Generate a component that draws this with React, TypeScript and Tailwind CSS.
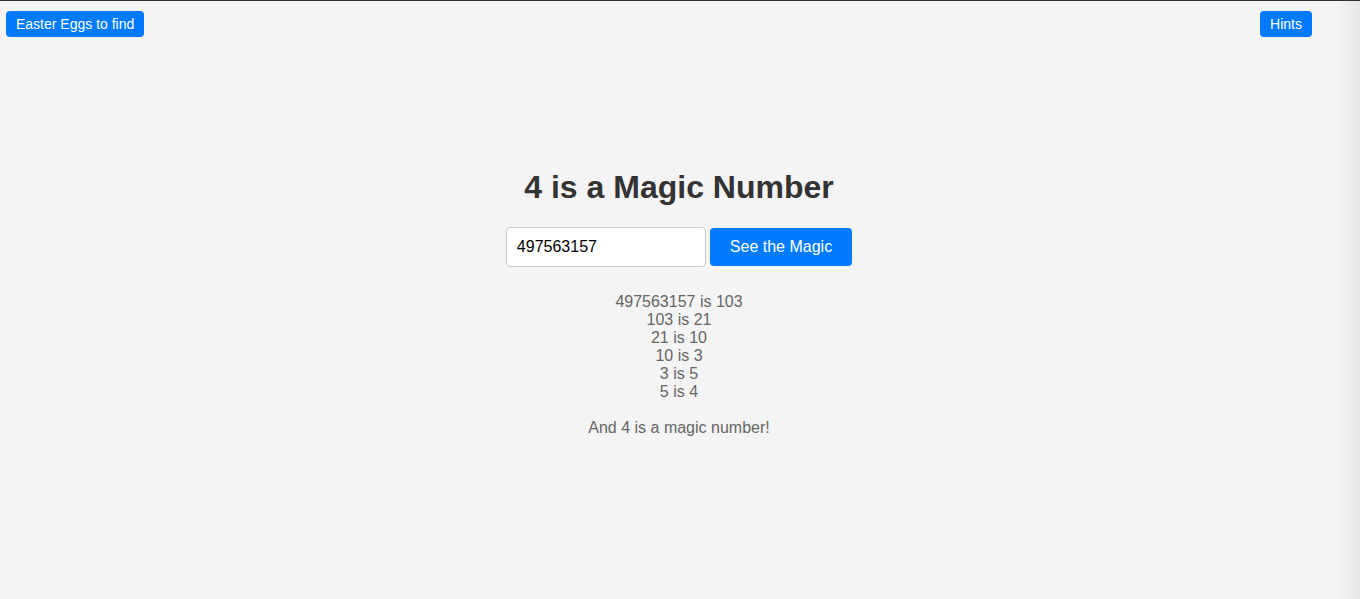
import React, { useState } from "react";

const font = { fontFamily: '"Liberation Sans", Arial, sans-serif' };

function steps(n: number): string[] {
  const words = [
    "zero", "one", "two", "three", "four", "five", "six", "seven", "eight", "nine",
  ];
  const lines: string[] = [];
  let cur = n;
  let guard = 0;
  while (cur !== 4 && guard < 20) {
    const next = cur === 497563157 ? 103 : cur === 103 ? 21 : cur === 21 ? 10 : cur === 10 ? 3 : cur === 3 ? 5 : cur === 5 ? 4 : words[cur % 10].length;
    lines.push(`${cur} is ${next}`);
    cur = next;
    guard++;
  }
  return lines;
}

const App: React.FC = () => {
  const [value, setValue] = useState("497563157");
  const lines = steps(497563157);

  return (
    <div
      className="min-h-screen bg-[#f4f4f4] border-t border-[#333] text-[#333]"
      style={font}
    >
      {/* Top buttons */}
      <div className="flex justify-between pl-[6px] pr-[48px] pt-[10px]">
        <button className="h-[26px] px-[10px] rounded-[4px] bg-[#007bff] text-white text-[14px] leading-none">
          Easter Eggs to find
        </button>
        <button className="h-[26px] px-[10px] rounded-[4px] bg-[#007bff] text-white text-[14px] leading-none">
          Hints
        </button>
      </div>

      {/* Main */}
      <div className="flex flex-col items-center pr-[2px]">
        <h1 className="mt-[132px] text-[32px] leading-[37px] font-bold text-[#333]">
          4 is a Magic Number
        </h1>
        <div className="mt-[21px] flex items-center gap-[4px]">
          <input
            value={value}
            onChange={(e) => setValue(e.target.value)}
            className="w-[200px] h-[40px] px-[10px] bg-white border border-[#ccc] rounded-[4px] text-[16px] text-black outline-none"
          />
          <button className="h-[38px] px-[20px] rounded-[4px] bg-[#007bff] text-white text-[16px]">
            See the Magic
          </button>
        </div>
        <div className="mt-[26px] flex flex-col items-center text-[16px] leading-[18px] text-[#666]">
          {lines.map((l) => (
            <div key={l}>{l}</div>
          ))}
          <div className="mt-[18px]">And 4 is a magic number!</div>
        </div>
      </div>

      {/* Off-screen panel shadow on the right */}
      <div className="fixed top-0 right-0 h-full w-[24px] bg-linear-to-l from-[rgba(0,0,0,0.05)] to-transparent pointer-events-none" />
    </div>
  );
};

export default App;
